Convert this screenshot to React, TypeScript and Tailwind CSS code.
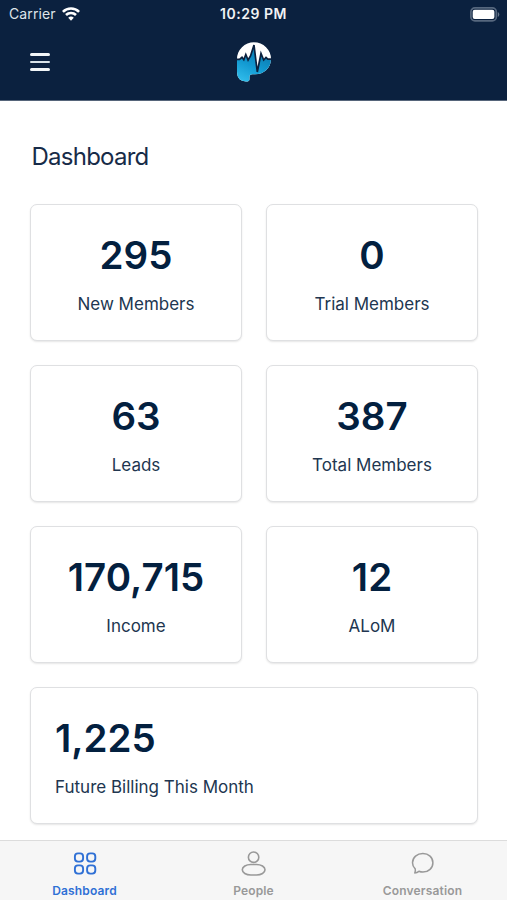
import type { ReactNode } from 'react';
import { clsx } from 'clsx';

interface StatProps {
  value: string;
  label: string;
  wide?: boolean;
}

const STATS: StatProps[] = [
  { value: '295', label: 'New Members' },
  { value: '0', label: 'Trial Members' },
  { value: '63', label: 'Leads' },
  { value: '387', label: 'Total Members' },
  { value: '170,715', label: 'Income' },
  { value: '12', label: 'ALoM' },
  { value: '1,225', label: 'Future Billing This Month', wide: true },
];

function StatCard({ value, label, wide }: StatProps) {
  return (
    <div
      className={clsx(
        'flex h-[137px] flex-col rounded-[7px] border border-[#dfe0e2] bg-white pt-7 shadow-[0_1px_2px_rgba(0,0,0,0.1)]',
        wide ? 'col-span-2 items-start pl-6' : 'items-center'
      )}
    >
      <span className="text-[38.5px] font-semibold leading-[44px] text-[#03203f]">{value}</span>
      <span className="mt-[15px] whitespace-nowrap text-[17px] leading-6 text-[#213650]">{label}</span>
    </div>
  );
}

function StatusBar() {
  return (
    <div className="grid h-7 grid-cols-3 items-center pl-[9px] pr-[7px] text-[14px] leading-5 text-[#dfe4e9]">
      <div className="flex items-center gap-[6px]">
        <span className="tracking-[0.1px]">Carrier</span>
        <svg width="18" height="14" viewBox="0 0 18 14" fill="none" stroke="white" strokeWidth="2.6">
          <path d="M.9 4.9a11.5 11.5 0 0 1 16.2 0" />
          <path d="M4 8a7.1 7.1 0 0 1 10 0" />
          <path d="M9 13.7 6.2 10.8a4 4 0 0 1 5.6 0Z" fill="white" stroke="none" />
        </svg>
      </div>
      <span className="-ml-0.5 whitespace-nowrap text-center font-semibold tracking-[0.5px] text-[#f1f3f5]">
        10:29 PM
      </span>
      <svg className="justify-self-end" width="30" height="15" viewBox="0 0 30 15">
        <rect x=".9" y=".9" width="25.4" height="13" rx="4" fill="none" stroke="#56677e" strokeWidth="1.7" />
        <rect x="2.7" y="2.7" width="21.7" height="9.4" rx="2" fill="white" />
        <path d="M27.8 5v5q1.5-.8 1.5-2.5T27.8 5Z" fill="#65758a" />
      </svg>
    </div>
  );
}

function PulseLogo() {
  return (
    <svg width="34" height="40" viewBox="0 0 34 40">
      <defs>
        <linearGradient id="pulse-fill" x1=".7" y1="0" x2=".25" y2="1">
          <stop offset="0" stopColor="#0870a5" />
          <stop offset=".55" stopColor="#1299d1" />
          <stop offset="1" stopColor="#31bdeb" />
        </linearGradient>
        <clipPath id="pulse-shape">
          <path d="M0 17A17 16.7 0 0 1 34 17C34 26 27 32.3 18 32.3h-2.5q-3 0-3 2.7v2.2q0 2.4-3.5 2.4Q0 39 0 30Z" />
        </clipPath>
      </defs>
      <g clipPath="url(#pulse-shape)">
        <path d="M0 0h34v40H0Z" fill="white" />
        <path
          d="M-1 17.3h3.5L5 15.3l1.8 2.4 2-5.2 2.3 5.5 2.4-4L17 3l3.3 27L24 11.5l2.7 6.5 2.3-2.5 1.8 1.7H35V41H-1Z"
          fill="url(#pulse-fill)"
        />
        <path
          d="M-1 17.3h3.5L5 15.3l1.8 2.4 2-5.2 2.3 5.5 2.4-4L17 3l3.3 27L24 11.5l2.7 6.5 2.3-2.5 1.8 1.7H35"
          fill="none"
          stroke="#0b213f"
          strokeWidth="1.7"
        />
      </g>
    </svg>
  );
}

function Header() {
  return (
    <header className="h-[101px] border-b border-[#56657a] bg-[#0b213f]">
      <StatusBar />
      <div className="grid h-[68px] grid-cols-3 items-center px-[30px]">
        <button className="flex w-5 flex-col gap-[5px]" aria-label="Menu">
          <span className="h-[2.5px] rounded-sm bg-[#f1f5f7]" />
          <span className="h-[2.5px] rounded-sm bg-[#d9e3e9]" />
          <span className="h-[2.5px] rounded-sm bg-[#f1f5f7]" />
        </button>
        <div className="flex justify-center">
          <PulseLogo />
        </div>
      </div>
    </header>
  );
}

function Tab({ label, active, children }: { label: string; active?: boolean; children: ReactNode }) {
  return (
    <button className={clsx('flex flex-col items-center pt-[9px]', active ? 'text-[#2f70d5]' : 'text-[#999999]')}>
      <svg width="28" height="28" viewBox="0 0 28 28" fill="none" stroke="currentColor">
        {children}
      </svg>
      <span className="mt-[5px] text-[12px] font-semibold leading-4 tracking-[0.15px]">{label}</span>
    </button>
  );
}

function TabBar() {
  return (
    <nav className="grid h-[60px] grid-cols-3 border-t border-[#dcdcdc] bg-[#f6f6f6]">
      <Tab label="Dashboard" active>
        <g strokeWidth="1.9">
          <rect x="3.9" y="3.4" width="8.2" height="8.2" rx="3.1" />
          <rect x="16.1" y="3.4" width="8.2" height="8.2" rx="3.1" />
          <rect x="3.9" y="15.4" width="8.2" height="8.2" rx="3.1" />
          <rect x="16.1" y="15.4" width="8.2" height="8.2" rx="3.1" />
        </g>
      </Tab>
      <Tab label="People">
        <g strokeWidth="1.6">
          <circle cx="13.6" cy="7.2" r="5.2" />
          <rect x="2.3" y="14.5" width="22.7" height="10.5" rx="8.5" ry="5.25" />
        </g>
      </Tab>
      <Tab label="Conversation">
        <path
          d="M6.2 18.9C4.4 17.3 3.5 15.2 3.5 12.8 3.5 7.5 8.1 3.5 13.9 3.5c5.7 0 10 3.9 10 9.2 0 5.3-4.3 9.4-10 9.4-1.5 0-2.8-.3-4-.8-1.2 1-2.4 1.6-4.1 1.6q.9-1.8.4-4Z"
          strokeWidth="1.5"
          strokeLinejoin="round"
        />
      </Tab>
    </nav>
  );
}

export default function App() {
  return (
    <div className="flex h-[900px] w-[507px] flex-col overflow-hidden bg-white font-['Inter',sans-serif]">
      <Header />
      <main className="flex-1 px-[30px] pt-10">
        <h1 className="pl-[1.5px] text-[24px] leading-8 tracking-[-0.75px] text-[#172b48]">Dashboard</h1>
        <div className="mt-[31px] grid grid-cols-[212px_212px] gap-6">
          {STATS.map((stat) => (
            <StatCard key={stat.label} {...stat} />
          ))}
        </div>
      </main>
      <TabBar />
    </div>
  );
}
